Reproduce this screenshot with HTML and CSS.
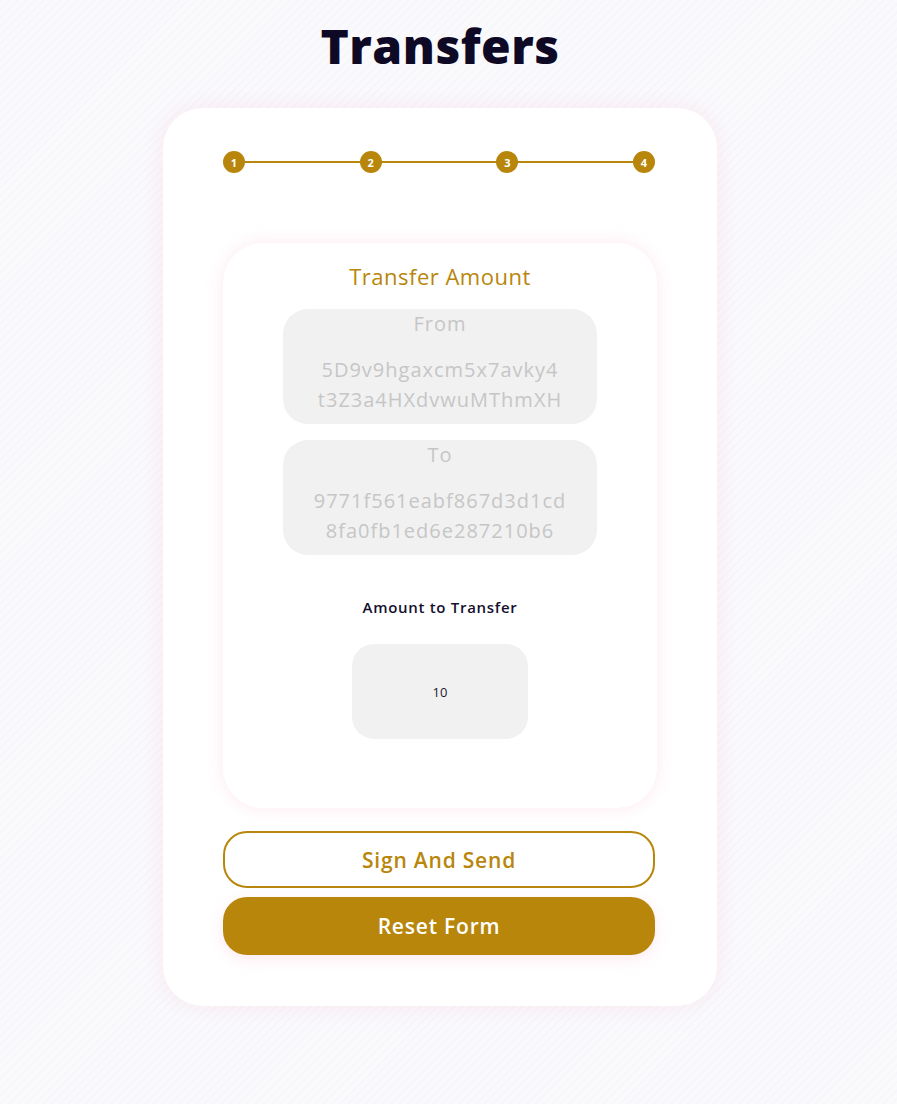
FILE: index.html
```html
<!DOCTYPE html>
<html lang="en">
<head>
<meta charset="utf-8">
<title>Transfers</title>
<link rel="stylesheet" href="styles.css">
</head>
<body>
<main class="page">
  <h1 class="title">Transfers</h1>
  <section class="card">
    <div class="stepper">
      <div class="stepper-line"></div>
      <span class="step">1</span>
      <span class="step">2</span>
      <span class="step">3</span>
      <span class="step">4</span>
    </div>
    <div class="inner">
      <h2 class="inner-title">Transfer Amount</h2>
      <div class="field">
        <div class="field-label">From</div>
        <div class="field-value"><span class="line">5D9v9hgaxcm5x7avky4</span><span class="line">t3Z3a4HXdvwuMThmXH</span></div>
      </div>
      <div class="field">
        <div class="field-label">To</div>
        <div class="field-value"><span class="line">9771f561eabf867d3d1cd</span><span class="line">8fa0fb1ed6e287210b6</span></div>
      </div>
      <div class="amount-label">Amount to Transfer</div>
      <div class="amount-input">10</div>
    </div>
    <div class="actions">
      <button class="btn btn-outline">Sign And Send</button>
      <button class="btn btn-solid">Reset Form</button>
    </div>
  </section>
</main>
</body>
</html>
```
FILE: styles.css
```css
* { box-sizing: border-box; }
html, body { margin: 0; padding: 0; }
body {
  font-family: "Open Sans", "DejaVu Sans", sans-serif;
  background: #fafafd;
  background-image: repeating-linear-gradient(135deg, rgba(235,235,245,0.25) 0 2px, rgba(255,255,255,0) 2px 6px);
  min-height: 1104px;
}
.page {
  display: flex;
  flex-direction: column;
  align-items: center;
  padding-top: 14px;
}
.title {
  margin: 0;
  font-size: 48px;
  font-weight: 800;
  line-height: 64px;
  color: #0e0a26;
  letter-spacing: 0.5px;
  margin-left: -17px;
}
.card {
  margin-top: 30px;
  width: 554px;
  background: #fff;
  border-radius: 40px;
  box-shadow: 0 0 24px rgba(250, 200, 215, 0.35);
  padding: 40px 60px 51px;
  margin-left: -17px;
}
.stepper {
  position: relative;
  display: flex;
  justify-content: space-between;
  align-items: center;
  width: 432px;
  height: 28px;
}
.stepper-line {
  position: absolute;
  left: 10px;
  right: 10px;
  top: 13px;
  height: 2px;
  background: #b8860b;
}
.step {
  position: relative;
  width: 22px;
  height: 22px;
  border-radius: 50%;
  background: #b8860b;
  color: #fff;
  font-size: 11px;
  font-weight: 700;
  display: flex;
  align-items: center;
  justify-content: center;
}
.inner {
  margin-top: 67px;
  background: #fff;
  border-radius: 40px;
  box-shadow: 0 0 18px rgba(250, 200, 215, 0.4);
  padding: 16px 60px 69px;
  display: flex;
  flex-direction: column;
  align-items: center;
}
.inner-title {
  margin: 0 0 16px;
  font-size: 22px;
  font-weight: 400;
  line-height: 34px;
  letter-spacing: 0.5px;
  color: #b8860b;
}
.field {
  width: 314px;
  background: #f1f1f1;
  border-radius: 25px;
  padding: 1px 6px 9px;
  text-align: center;
  color: #c6c6c6;
  margin-bottom: 16px;
}
.field:last-of-type { margin-bottom: 0; }
.field-label {
  font-size: 20px;
  line-height: 28px;
  letter-spacing: 1px;
  margin-bottom: 17px;
}
.field-value {
  font-size: 20px;
  line-height: 30px;
  letter-spacing: 1px;
}
.line { display: block; }
.amount-label {
  margin-top: 25px;
  font-size: 15px;
  font-weight: 600;
  line-height: 22px;
  letter-spacing: 0.7px;
  color: #14102e;
}
.amount-input {
  margin-top: 26px;
  width: 176px;
  height: 95px;
  border-radius: 22px;
  background: #f1f1f1;
  display: flex;
  align-items: center;
  justify-content: center;
  font-size: 13px;
  color: #1a1a2e;
}
.actions {
  margin-top: 23px;
  display: flex;
  flex-direction: column;
  gap: 9px;
}
.btn {
  width: 432px;
  font-family: inherit;
  font-size: 21px;
  font-weight: 600;
  letter-spacing: 0.8px;
  border-radius: 24px;
  cursor: pointer;
}
.btn-outline {
  height: 57px;
  background: #fff;
  border: 2px solid #b8860b;
  color: #b8860b;
}
.btn-solid {
  height: 58px;
  background: #b8860b;
  border: none;
  color: #fff;
  box-shadow: 0 4px 16px rgba(250, 200, 215, 0.4);
}
```
